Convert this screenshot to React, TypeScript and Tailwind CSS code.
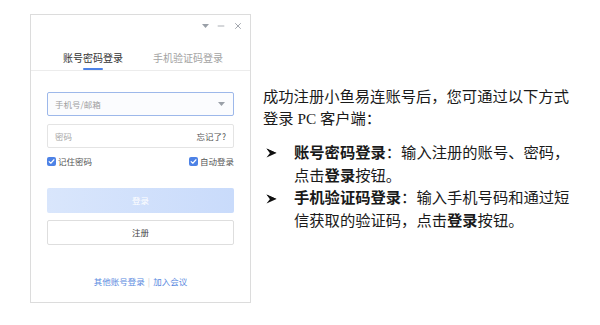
import { Minus, X } from 'lucide-react';

const ui = { fontFamily: '"Noto Sans CJK SC", "Noto Sans", sans-serif' };
const doc = { fontFamily: '"Liberation Serif", "Noto Sans CJK SC", serif' };

function Check() {
  return (
    <span className="w-[9px] h-[9px] rounded-[2px] bg-[#4d82e6] flex items-center justify-center">
      <svg width="7" height="7" viewBox="0 0 8 8" fill="none">
        <path d="M1.3 4.1 3.2 6 6.8 2" stroke="white" strokeWidth="1.3" strokeLinecap="round" strokeLinejoin="round" />
      </svg>
    </span>
  );
}

function Caret() {
  return (
    <svg width="7" height="4" viewBox="0 0 7 4">
      <path d="M0 0h7L3.5 4z" fill="#9aa0a8" />
    </svg>
  );
}

function Arrowhead() {
  return (
    <svg width="11" height="10" viewBox="0 0 11 10">
      <path d="M0.5 0.5 10.5 5 0.5 9.5 4 5z" fill="#111" />
      <path d="M0.5 0.5 10.5 5 4 5z" fill="#111" />
    </svg>
  );
}

function LoginWindow() {
  return (
    <div className="w-[221px] h-[289px] border border-[#dcdcdc] bg-white flex flex-col shrink-0" style={ui}>
      {/* title bar */}
      <div className="h-[21px] flex items-center justify-end gap-[7px] pr-[7px] text-[#9a9fa6]">
        <Caret />
        <Minus size={10} strokeWidth={2} />
        <X size={10} strokeWidth={2.2} />
      </div>

      {/* tabs */}
      <div className="h-[35px] border-b border-[#ececec] flex gap-[30px] pl-[32px]">
        <div className="flex flex-col items-center pt-[15px]">
          <span className="text-[10px] leading-[14px] text-[#333] whitespace-nowrap">账号密码登录</span>
          <span className="mt-[3px] w-[20px] h-[2px] bg-[#4d82e6] rounded-full" />
        </div>
        <div className="flex flex-col items-center pt-[15px]">
          <span className="text-[10px] leading-[14px] text-[#a3a3a3] whitespace-nowrap">手机验证码登录</span>
        </div>
      </div>

      <div className="mx-[16px] flex flex-col">
        <div className="mt-[21px] h-[24px] border border-[#9db8ea] bg-[#fbfcfe] rounded-[2px] flex items-center justify-between pl-[7px] pr-[8px]">
          <span className="text-[8.5px] text-[#a0a0a0]">手机号/邮箱</span>
          <Caret />
        </div>
        <div className="mt-[8px] h-[24px] border border-[#e4e4e4] rounded-[2px] flex items-center justify-between pl-[7px] pr-[7px]">
          <span className="text-[8.5px] text-[#a8a8a8]">密码</span>
          <span className="text-[8.5px] text-[#555]">忘记了?</span>
        </div>
        <div className="mt-[7px] h-[12px] flex items-center justify-between">
          <div className="flex items-center gap-[2px]">
            <Check />
            <span className="text-[8.5px] text-[#555]">记住密码</span>
          </div>
          <div className="flex items-center gap-[2px]">
            <Check />
            <span className="text-[8.5px] text-[#555]">自动登录</span>
          </div>
        </div>
        <button className="mt-[21px] h-[25px] rounded-[2px] bg-gradient-to-r from-[#d9e6fc] to-[#c9dbfb] text-white text-[8.5px]">
          登录
        </button>
        <button className="mt-[7px] h-[25px] rounded-[2px] border border-[#dedede] bg-white text-[#444] text-[8.5px]">
          注册
        </button>
        <div className="mt-[30px] h-[12px] flex items-center justify-center gap-[3px] text-[8.5px] text-[#5a8ae0]">
          <span>其他账号登录</span>
          <span className="text-[#d0d0d0]">|</span>
          <span>加入会议</span>
        </div>
      </div>
    </div>
  );
}

function Bullet({ children }: { children: React.ReactNode }) {
  return (
    <div className="flex">
      <span className="w-[31px] shrink-0 h-[22.7px] flex items-center pl-[3px]">
        <Arrowhead />
      </span>
      <div className="flex flex-col">{children}</div>
    </div>
  );
}

export default function App() {
  return (
    <div className="w-[600px] h-[325px] bg-white flex pl-[30px] pt-[14px] gap-[12px]">
      <LoginWindow />
      <div className="pt-[72px] text-[15.3px] text-[#1a1a1a] whitespace-nowrap" style={doc}>
        <p className="leading-[21.5px]">成功注册小鱼易连账号后，您可通过以下方式</p>
        <p className="leading-[21.5px]">登录 PC 客户端：</p>
        <div className="mt-[13px] flex flex-col leading-[22.7px]">
          <Bullet>
            <span><b>账号密码登录</b>：输入注册的账号、密码，</span>
            <span>点击<b>登录</b>按钮。</span>
          </Bullet>
          <Bullet>
            <span><b>手机验证码登录</b>：输入手机号码和通过短</span>
            <span>信获取的验证码，点击<b>登录</b>按钮。</span>
          </Bullet>
        </div>
      </div>
    </div>
  );
}
